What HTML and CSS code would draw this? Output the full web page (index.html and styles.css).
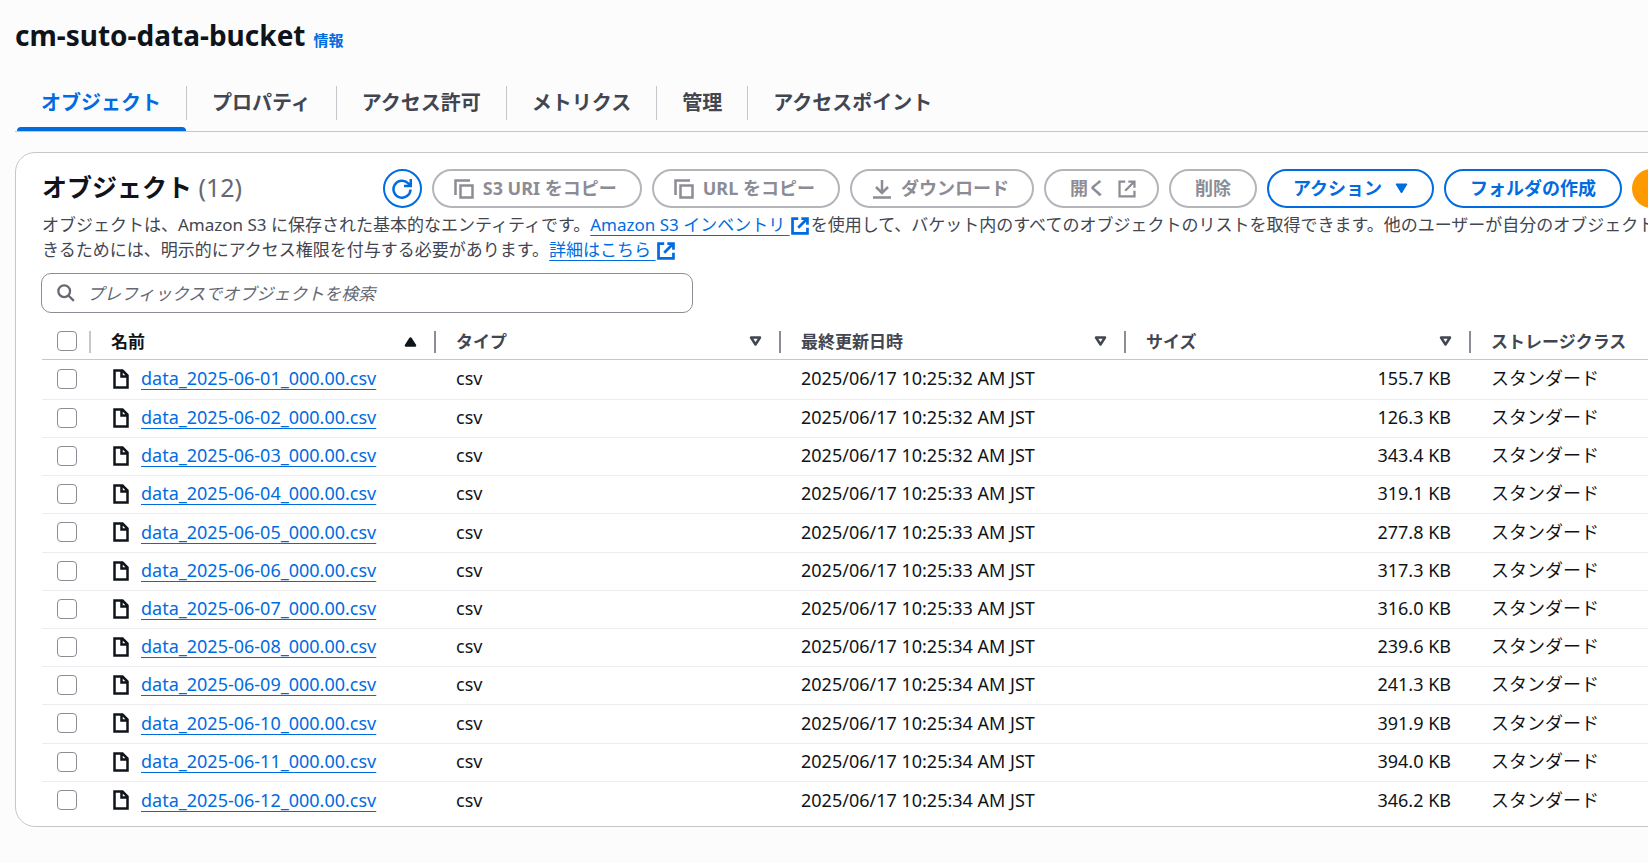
FILE: index.html
```html
<!DOCTYPE html>
<html lang="ja">

<head>
  <meta charset="UTF-8">
  <meta name="viewport" content="width=device-width, initial-scale=1.0">
  <title>cm-suto-data-bucket</title>
  <link rel="stylesheet" href="styles.css">
</head>

<body>

  <!-- shared icons -->
  <svg class="sprite" aria-hidden="true">
    <symbol id="copy" viewBox="0 0 20 20">
      <path d="M1.5 16V1.5H16M6.5 6.5h12v12h-12z"/>
    </symbol>
    <symbol id="external" viewBox="0 0 20 20">
      <path d="M8 1.7H1.7v16.6h16.6V12M11.5 1.7h6.8v6.8M18 2L8 12"/>
    </symbol>
    <symbol id="file" viewBox="0 0 16 20">
      <path d="M1.5 1.5h8l5 5v12h-13zM8.5 1.5v6h6"/>
    </symbol>
    <symbol id="sort" viewBox="0 0 13 11">
      <path d="M2 1.5h9L6.5 8.5z"/>
    </symbol>
  </svg>

  <main>

    <div class="page-title">
      <h1>cm-suto-data-bucket</h1>
      <a href="#" class="info">情報</a>
    </div>

    <nav class="tabs">
      <a href="#" class="tab active">オブジェクト</a>
      <a href="#" class="tab">プロパティ</a>
      <a href="#" class="tab">アクセス許可</a>
      <a href="#" class="tab">メトリクス</a>
      <a href="#" class="tab">管理</a>
      <a href="#" class="tab">アクセスポイント</a>
    </nav>

    <section class="panel">

      <div class="panel-header">
        <h2>オブジェクト <span class="count">(12)</span></h2>

        <div class="actions">
          <button class="button round" aria-label="更新">
            <svg class="icon" viewBox="0 0 20 20"><path d="M18.5 10.5A8.5 8.5 0 1 1 16 4.2L18.5 6.5M18.8 0v7H12"/></svg>
          </button>
          <button class="button" disabled><svg class="icon"><use href="#copy"/></svg>S3 URI をコピー</button>
          <button class="button" disabled><svg class="icon"><use href="#copy"/></svg>URL をコピー</button>
          <button class="button" disabled>
            <svg class="icon" viewBox="0 0 20 20"><path d="M10 1v13M4 8l6 6 6-6M1 18.5h18"/></svg>ダウンロード
          </button>
          <button class="button open" disabled>開く<svg class="icon small"><use href="#external"/></svg></button>
          <button class="button wide" disabled>削除</button>
          <button class="button wide">アクション<svg class="caret" viewBox="0 0 13 11"><path d="M1 1h11L6.5 10z"/></svg></button>
          <button class="button wide">フォルダの作成</button>
          <button class="button primary">
            <svg class="icon" viewBox="0 0 20 20"><path d="M10 14V1M4 7l6-6 6 6M1 18.5h18"/></svg>アップロード
          </button>
        </div>
      </div>

      <p class="description">
        オブジェクトは、Amazon S3 に保存された基本的なエンティティです。<a href="#">Amazon S3 インベントリ </a><svg class="icon link-icon"><use href="#external"/></svg>を使用して、バケット内のすべてのオブジェクトのリストを取得できます。他のユーザーが自分のオブジェクトにアクセスで<br>
        きるためには、明示的にアクセス権限を付与する必要があります。<a href="#">詳細はこちら </a><svg class="icon link-icon"><use href="#external"/></svg>
      </p>

      <label class="search">
        <svg class="icon small" viewBox="0 0 20 20"><circle cx="8" cy="8" r="6.5"/><path d="M12.7 12.7l6 6"/></svg>
        <input type="search" placeholder="プレフィックスでオブジェクトを検索" aria-label="プレフィックスでオブジェクトを検索">
      </label>

      <table>
        <thead>
          <tr>
            <th class="check"><input type="checkbox" aria-label="すべて選択"></th>
            <th class="sorted"><div>名前<svg class="sort"><use href="#sort"/></svg></div></th>
            <th><div>タイプ<svg class="sort"><use href="#sort"/></svg></div></th>
            <th><div>最終更新日時<svg class="sort"><use href="#sort"/></svg></div></th>
            <th><div>サイズ<svg class="sort"><use href="#sort"/></svg></div></th>
            <th><div>ストレージクラス<svg class="sort"><use href="#sort"/></svg></div></th>
          </tr>
        </thead>
        <tbody id="rows"></tbody>
      </table>

    </section>

  </main>

  <script src="script.js"></script>

</body>

</html>
```
FILE: styles.css
```css
* {
  box-sizing: border-box;
}

body {
  margin: 0;
  background-color: #fcfcfd;
  color: #0f141a;
  font-family: "Noto Sans", "Noto Sans CJK JP", sans-serif;
  font-size: 17px;
  line-height: 25px;
  overflow-x: hidden;
}

main {
  padding: 15px 15px 36px;
  overflow: hidden;
}

a {
  color: #006ce0;
  text-underline-offset: 4px;
  text-decoration-thickness: 1px;
  text-decoration-skip-ink: none;
}

.sprite {
  display: none;
}

.icon {
  width: 20px;
  height: 20px;
  flex: none;
  fill: none;
  stroke: currentColor;
  stroke-width: 2.5;
}

.small {
  width: 18px;
  height: 18px;
}

/* title and tabs */

.page-title {
  display: flex;
  align-items: baseline;
  gap: 8px;
}

h1 {
  margin: 0;
  font-size: 28px;
  line-height: 40px;
}

.info {
  font-size: 15px;
  font-weight: bold;
  text-decoration: none;
}

.tabs {
  display: flex;
  margin-top: 24px;
  margin-right: -15px;
  border-bottom: 1px solid #c6c6cd;
}

.tab {
  position: relative;
  padding: 12px 25px 16px 26px;
  color: #424650;
  font-size: 20px;
  font-weight: bold;
  line-height: 24px;
  text-decoration: none;
}

.tab + .tab::before {
  content: "";
  position: absolute;
  left: 0;
  top: 7px;
  height: 34px;
  border-left: 1px solid #c6c6cd;
}

.tab.active {
  color: #006ce0;
}

.tab.active::after {
  content: "";
  position: absolute;
  left: 2px;
  right: 0;
  bottom: 0;
  height: 4px;
  border-radius: 4px 4px 0 0;
  background-color: #006ce0;
}

/* panel */

.panel {
  width: max-content;
  margin-top: 20px;
  padding: 16px 26px 6px;
  border: 1px solid #c6c6cd;
  border-radius: 20px;
  background-color: white;
}

.panel-header {
  display: flex;
  justify-content: space-between;
}

h2 {
  margin: 0;
  font-size: 25px;
  line-height: 36px;
}

.count {
  color: #656871;
  font-weight: normal;
}

.actions {
  display: flex;
  gap: 10px;
}

.button {
  display: flex;
  align-items: center;
  gap: 9px;
  height: 39px;
  padding: 0 23px 0 20px;
  border: 2px solid #006ce0;
  border-radius: 20px;
  background-color: white;
  color: #006ce0;
  font: inherit;
  font-size: 18px;
  font-weight: bold;
  white-space: nowrap;
}

.button:disabled {
  border-color: #b4b4bb;
  color: #8c8c94;
}

.button.wide {
  gap: 13px;
  padding: 0 24px;
}

.button.open {
  gap: 12px;
  padding: 0 21px 0 24px;
}

.button.round {
  width: 39px;
  padding: 0;
  justify-content: center;
}

.button.primary {
  border-color: #ff9900;
  background-color: #ff9900;
  color: #0f141a;
}

.caret {
  width: 13px;
  height: 11px;
  fill: currentColor;
  stroke: currentColor;
  stroke-linejoin: round;
}

.description {
  margin: 4px 0 0;
  color: #424650;
  white-space: nowrap;
}

.link-icon {
  width: 18px;
  height: 18px;
  margin-left: 1px;
  margin-right: 2px;
  color: #006ce0;
  stroke-width: 3;
  vertical-align: -4px;
}

.search {
  display: flex;
  align-items: center;
  gap: 12px;
  width: 652px;
  height: 40px;
  margin-top: 11px;
  margin-left: -1px;
  padding: 0 16px 0 15px;
  border: 1px solid #8c8c94;
  border-radius: 10px;
  color: #656871;
}

.search input {
  flex: 1;
  padding: 0;
  border: none;
  outline: none;
  background: none;
  font: inherit;
}

.search input::placeholder {
  color: #656871;
  font-style: italic;
}

/* table */

table {
  border-collapse: separate;
  border-spacing: 0;
  table-layout: fixed;
  width: 1774px;
}

th {
  position: relative;
  height: 47px;
  padding: 11px 19px 0 20px;
  border-bottom: 1px solid #c6c6cd;
  color: #424650;
  text-align: left;
}

th div {
  display: flex;
  align-items: center;
  justify-content: space-between;
}

th:not(:last-child)::after {
  content: "";
  position: absolute;
  right: 0;
  top: 18px;
  height: 22px;
  border-right: 2px solid #8c8c94;
}

th.check::after {
  border-color: #c6c6cd;
}

td {
  height: 38px;
  padding: 0 20px 2px;
  border-bottom: 1px solid #ebebf0;
  font-size: 18px;
  white-space: nowrap;
}

tbody tr:first-child td {
  height: 40px;
}

tbody tr:nth-child(5n) td {
  height: 39px;
}

tbody tr:last-child td {
  border-bottom: none;
}

th.check,
td.check {
  width: 49px;
  padding-left: 14px;
  padding-right: 0;
  padding-bottom: 2px;
}

.check input {
  appearance: none;
  display: block;
  width: 20px;
  height: 20px;
  margin: 0 0 0 1px;
  border: 1px solid #8c8c94;
  border-radius: 4px;
  background-color: white;
}

th.sorted {
  color: #0f141a;
}

.sort {
  width: 13px;
  height: 11px;
  fill: none;
  stroke: currentColor;
  stroke-width: 2.5;
  stroke-linejoin: round;
}

.sorted .sort {
  fill: currentColor;
  transform: rotate(180deg);
}

.file {
  display: flex;
  align-items: center;
  gap: 12px;
  padding-left: 2px;
}

.file svg {
  width: 16px;
  color: #0f141a;
}

.size {
  text-align: right;
}
```
FILE: script.js
```js
const files = [
  ['01', '32', '155.7'],
  ['02', '32', '126.3'],
  ['03', '32', '343.4'],
  ['04', '33', '319.1'],
  ['05', '33', '277.8'],
  ['06', '33', '317.3'],
  ['07', '33', '316.0'],
  ['08', '34', '239.6'],
  ['09', '34', '241.3'],
  ['10', '34', '391.9'],
  ['11', '34', '394.0'],
  ['12', '34', '346.2']
];

let html = '';

files.forEach(([day, seconds, size]) => {
  const name = `data_2025-06-${day}_000.00.csv`;

  html += `
    <tr>
      <td class="check"><input type="checkbox" aria-label="${name}"></td>
      <td><div class="file"><svg class="icon"><use href="#file"/></svg><a href="#">${name}</a></div></td>
      <td>csv</td>
      <td>2025/06/17 10:25:${seconds} AM JST</td>
      <td class="size">${size} KB</td>
      <td>スタンダード</td>
    </tr>`;
});

document.querySelector('#rows').innerHTML = html;
```
